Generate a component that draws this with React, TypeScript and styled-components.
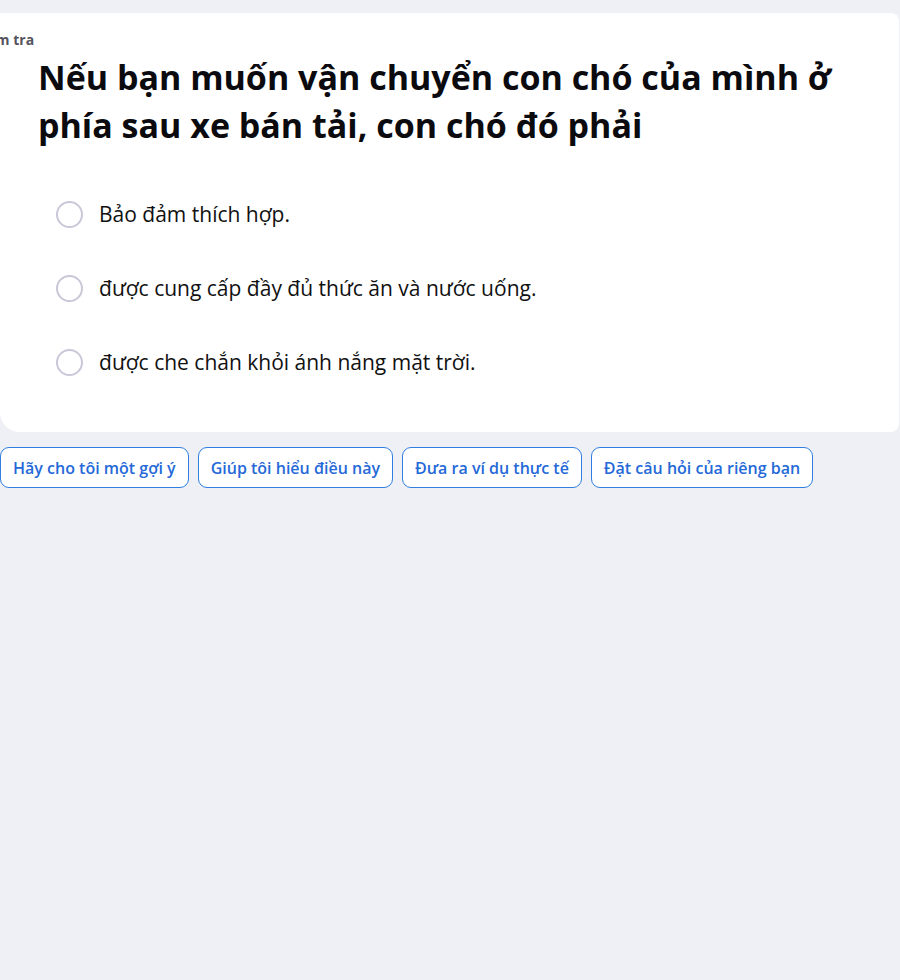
import React from "react";
import styled, { createGlobalStyle } from "styled-components";

const Global = createGlobalStyle`
  html, body { margin: 0; padding: 0; background: #eff0f5; }
  body { font-family: "Open Sans", "Noto Sans", sans-serif; overflow: hidden; }
`;

const Page = styled.div`
  width: 900px;
  height: 980px;
  padding-top: 13px;
  box-sizing: border-box;
  background: #eff0f5;
  overflow: hidden;
`;

const Card = styled.section`
  width: 899px;
  background: #ffffff;
  border-radius: 0 8px 8px 20px;
  padding: 18px 0 56px 0;
  box-sizing: border-box;
`;

const Tag = styled.div`
  margin-left: -26px;
  font-size: 14px;
  font-weight: 700;
  color: #55535e;
  line-height: 18px;
`;

const Question = styled.h1`
  margin: 4px 0 0 38px;
  font-size: 34px;
  font-weight: 700;
  line-height: 48px;
  color: #0b0b0f;
  max-width: 815px;
`;

const Options = styled.div`
  margin-top: 51px;
  display: flex;
  flex-direction: column;
  gap: 46px;
  padding-left: 56px;
`;

const Option = styled.label`
  display: flex;
  align-items: center;
  gap: 16px;
  font-size: 21px;
  color: #111;
  line-height: 28px;
`;

const Radio = styled.span`
  border: 2px solid #c9c7d8;
  border-radius: 50%;
  box-sizing: border-box;
  flex: none;
  width: 27px;
  height: 27px;
`;

const Chips = styled.div`
  display: flex;
  gap: 9px;
  margin-top: 15px;
`;

const Chip = styled.button`
  height: 41px;
  padding: 0 12px;
  border: 1px solid #2f7ee0;
  border-radius: 9px;
  background: #ffffff;
  color: #2569d8;
  font-family: "Open Sans", "Noto Sans", sans-serif;
  font-size: 16px;
  font-weight: 600;
  cursor: pointer;
`;

const options = [
  "Bảo đảm thích hợp.",
  "được cung cấp đầy đủ thức ăn và nước uống.",
  "được che chắn khỏi ánh nắng mặt trời.",
];

const chips = [
  "Hãy cho tôi một gợi ý",
  "Giúp tôi hiểu điều này",
  "Đưa ra ví dụ thực tế",
  "Đặt câu hỏi của riêng bạn",
];

export default function App() {
  return (
    <Page>
      <Global />
      <Card>
        <Tag>Kiểm tra</Tag>
        <Question>Nếu bạn muốn vận chuyển con chó của mình ở phía sau xe bán tải, con chó đó phải</Question>
        <Options>
          {options.map((o) => (
            <Option key={o}>
              <Radio />
              {o}
            </Option>
          ))}
        </Options>
      </Card>
      <Chips>
        {chips.map((c) => (
          <Chip key={c}>{c}</Chip>
        ))}
      </Chips>
    </Page>
  );
}
